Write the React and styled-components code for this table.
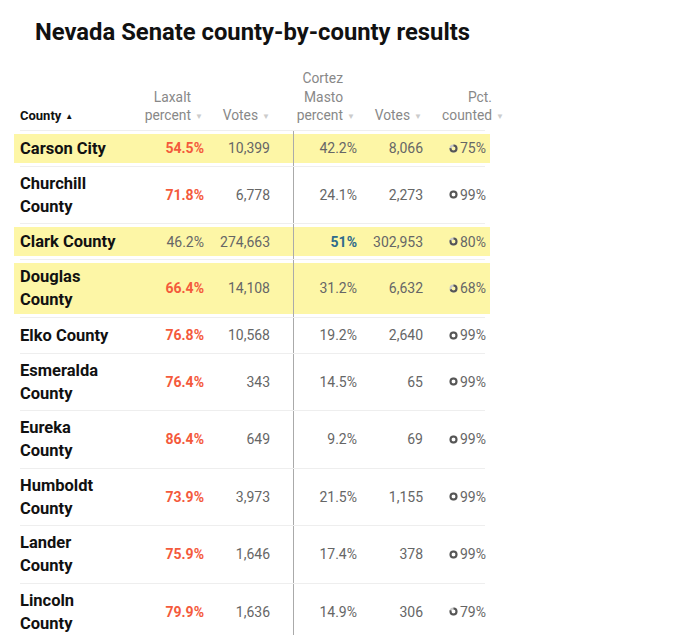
import React from "react";
import styled, { createGlobalStyle } from "styled-components";

const GlobalStyle = createGlobalStyle`
  html, body {
    margin: 0;
    padding: 0;
    background: #fff;
  }
  body {
    font-family: Roboto, "Liberation Sans", sans-serif;
    color: #111;
  }
`;

const rows = [
  { name: "Carson City", lp: "54.5%", lv: "10,399", cp: "42.2%", cv: "8,066", pct: 75, hl: true, win: "l" },
  { name: "Churchill County", lp: "71.8%", lv: "6,778", cp: "24.1%", cv: "2,273", pct: 99, win: "l" },
  { name: "Clark County", lp: "46.2%", lv: "274,663", cp: "51%", cv: "302,953", pct: 80, hl: true, win: "c" },
  { name: "Douglas County", lp: "66.4%", lv: "14,108", cp: "31.2%", cv: "6,632", pct: 68, hl: true, win: "l" },
  { name: "Elko County", lp: "76.8%", lv: "10,568", cp: "19.2%", cv: "2,640", pct: 99, win: "l" },
  { name: "Esmeralda County", lp: "76.4%", lv: "343", cp: "14.5%", cv: "65", pct: 99, win: "l" },
  { name: "Eureka County", lp: "86.4%", lv: "649", cp: "9.2%", cv: "69", pct: 99, win: "l" },
  { name: "Humboldt County", lp: "73.9%", lv: "3,973", cp: "21.5%", cv: "1,155", pct: 99, win: "l" },
  { name: "Lander County", lp: "75.9%", lv: "1,646", cp: "17.4%", cv: "378", pct: 99, win: "l" },
  { name: "Lincoln County", lp: "79.9%", lv: "1,636", cp: "14.9%", cv: "306", pct: 79, win: "l" },
];

const COLS = "120px 68px 85px 68px 66px 58px";

const Page = styled.div`
  padding: 16px 0 0 20px;
  width: 465px;
`;

const Title = styled.h1`
  margin: 0 0 0 15px;
  font-size: 23.8px;
  font-weight: 700;
  color: #111;
  line-height: 32px;
`;

const Head = styled.div`
  display: grid;
  grid-template-columns: ${COLS};
  align-items: end;
  margin-top: 21px;
  border-bottom: 1px solid #eee;
  padding-bottom: 3px;
`;

const HeadCell = styled.div`
  font-size: ${(p) => (p.$main ? 13 : 13.8)}px;
  line-height: 18.5px;
  color: ${(p) => (p.$main ? "#111" : "#888")};
  font-weight: ${(p) => (p.$main ? 700 : 400)};
  text-align: ${(p) => (p.$main ? "left" : "right")};
  padding-right: ${(p) => p.$pr || 0}px;
  margin-right: ${(p) => p.$mr || 0}px;
`;

const Arrow = styled.span`
  display: inline-block;
  width: 10px;
  font-size: 8px;
  color: ${(p) => (p.$dark ? "#111" : "#ccc")};
  margin-left: 4px;
  margin-right: ${(p) => (p.$dark ? 0 : -14)}px;
  text-align: left;
  vertical-align: 1px;
`;

const Body = styled.div`
  background: linear-gradient(#aaa, #aaa) no-repeat 273px 0 / 1px 100%;
`;

const Row = styled.div`
  display: grid;
  grid-template-columns: ${COLS};
  padding: 3px 0;
  border-bottom: 1px solid #eee;
`;

const Cell = styled.div`
  display: flex;
  align-items: center;
  justify-content: ${(p) => (p.$name ? "flex-start" : "flex-end")};
  min-height: ${(p) => (p.$tall ? 50.5 : 29)}px;
  padding-right: ${(p) => p.$pr || 0}px;
  background: ${(p) => (p.$hl ? "#fdf6a6" : "transparent")};
  box-shadow: ${(p) => (p.$div && p.$hl ? "inset 1px 0 #aaa" : "none")};
  margin-left: ${(p) => (p.$name ? -6 : 0)}px;
  padding-left: ${(p) => (p.$name ? 6 : 0)}px;
  margin-right: ${(p) => (p.$last ? -5 : 0)}px;
`;

const Name = styled.span`
  font-size: 16.5px;
  font-weight: 700;
  line-height: 23px;
  color: #111;
  width: 96px;
`;

const Num = styled.span`
  font-size: 14px;
  color: ${(p) => p.$color || "#666"};
  font-weight: ${(p) => (p.$color ? 700 : 400)};
`;

const Pct = styled.span`
  display: inline-flex;
  align-items: center;
  gap: 2px;
  font-size: 14px;
  color: #666;
`;

const Ring = ({ pct }) => {
  const r = 3;
  const c = 2 * Math.PI * r;
  return (
    <svg width="9" height="9" viewBox="0 0 9 9">
      <circle cx="4.5" cy="4.5" r={r} fill="none" stroke="#c8c8c8" strokeWidth="2" />
      <circle
        cx="4.5"
        cy="4.5"
        r={r}
        fill="none"
        stroke="#555"
        strokeWidth="2"
        strokeDasharray={`${(c * pct) / 100} ${c}`}
        transform="rotate(-90 4.5 4.5)"
      />
    </svg>
  );
};

const App = () => {
  return (
    <Page>
      <GlobalStyle />
      <Title>Nevada Senate county-by-county results</Title>
      <Head>
        <HeadCell $main>
          County<Arrow $dark>▲</Arrow>
        </HeadCell>
        <HeadCell $pr={17}>
          Laxalt
          <br />
          percent<Arrow>▼</Arrow>
        </HeadCell>
        <HeadCell $pr={35}>
          Votes<Arrow>▼</Arrow>
        </HeadCell>
        <HeadCell $pr={18}>
          Cortez
          <br />
          Masto
          <br />
          percent<Arrow>▼</Arrow>
        </HeadCell>
        <HeadCell $pr={17}>
          Votes<Arrow>▼</Arrow>
        </HeadCell>
        <HeadCell $mr={-7}>
          Pct.
          <br />
          counted<Arrow>▼</Arrow>
        </HeadCell>
      </Head>
      <Body>
        {rows.map((r) => {
          const tall = r.name.length > 12;
          return (
            <Row key={r.name}>
              <Cell $name $hl={r.hl} $tall={tall}>
                <Name>{r.name}</Name>
              </Cell>
              <Cell $hl={r.hl} $pr={4}>
                <Num $color={r.win === "l" ? "#f45a3c" : null}>{r.lp}</Num>
              </Cell>
              <Cell $hl={r.hl} $pr={23}>
                <Num>{r.lv}</Num>
              </Cell>
              <Cell $hl={r.hl} $pr={4} $div>
                <Num $color={r.win === "c" ? "#2e6b8c" : null}>{r.cp}</Num>
              </Cell>
              <Cell $hl={r.hl} $pr={4}>
                <Num>{r.cv}</Num>
              </Cell>
              <Cell $hl={r.hl} $pr={4} $last>
                <Pct>
                  <Ring pct={r.pct} />
                  {r.pct}%
                </Pct>
              </Cell>
            </Row>
          );
        })}
      </Body>
    </Page>
  );
};

export default App;
